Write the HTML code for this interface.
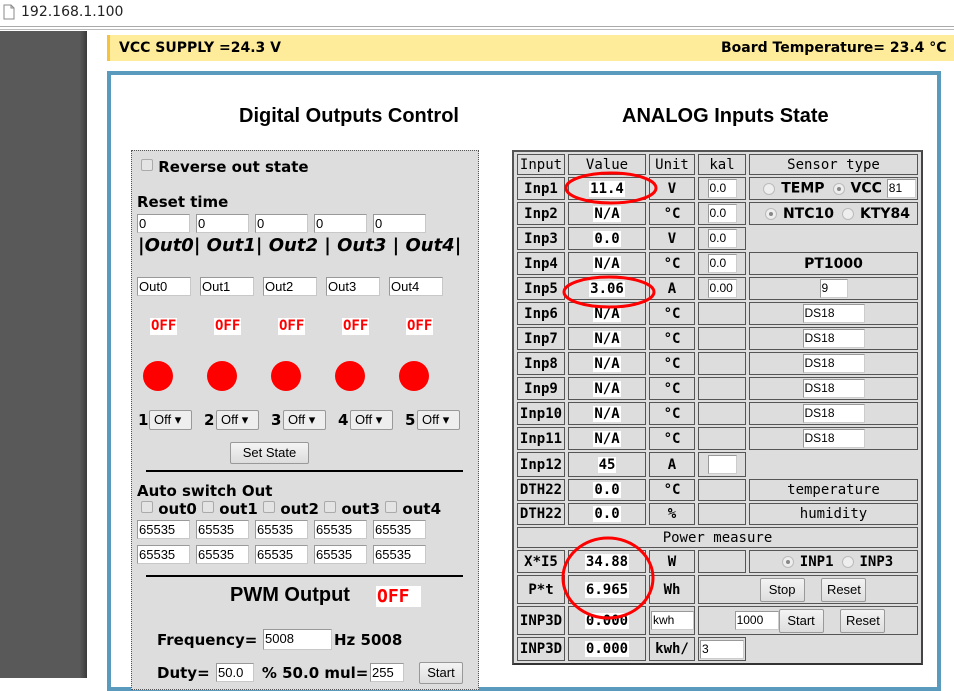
<!DOCTYPE html>
<html><head><meta charset="utf-8"><style>
*{box-sizing:border-box}
body{margin:0;width:954px;height:678px;overflow:hidden;background:#fff;font-family:"DejaVu Sans","Liberation Sans",sans-serif;position:relative}
.a{position:absolute}
.in{position:absolute;background:#fff;border:1px solid #c8c8c8;border-top-color:#999;border-left-color:#999;font:13px "Liberation Sans",sans-serif;padding:1px 1px;height:19px;line-height:15px;color:#000}
.b{font-weight:bold}
.off{position:absolute;background:#fff;color:#f00;font:bold 14px "DejaVu Sans Mono",monospace;padding:0 1px;line-height:17px}
.dot{position:absolute;width:30px;height:30px;border-radius:50%;background:#f00}
.sel{position:absolute;height:20px;border:1px solid #999;border-radius:2px;background:#eee;font:13px "Liberation Sans",sans-serif;padding:1px 4px;line-height:16px;width:43px}
.btn{position:absolute;border:1px solid #999;border-radius:2px;background:linear-gradient(#f4f4f4,#ddd);font:13px "Liberation Sans",sans-serif;text-align:center;line-height:20px}
table{position:absolute;left:512px;top:150px;width:411px;border:2px solid #555;border-right-color:#444;border-bottom-color:#333;border-spacing:3px 2px;background:#ddd;table-layout:fixed}
td{border:1px solid #555;padding:0;text-align:center;font:bold 14px "DejaVu Sans Mono",monospace;white-space:nowrap;overflow:hidden}
td.m{font-weight:normal}
td.s{font-family:"DejaVu Sans",sans-serif}
.v{background:#fff;font:bold 14px "DejaVu Sans Mono",monospace;padding:0 1px}
.ti{display:inline-block;background:#fff;border:1px solid #ccc;border-top-color:#999;border-left-color:#999;font:12px "Liberation Sans",sans-serif;font-weight:normal;text-align:left;height:19px;line-height:17px;padding-left:1px;vertical-align:middle}
.rd{display:inline-block;width:12px;height:12px;border-radius:50%;border:1px solid #bbb;background:#eee;vertical-align:middle;margin:0 6px 0 8px;position:relative}
.rd.on:after{content:"";position:absolute;left:3px;top:3px;width:4px;height:4px;border-radius:50%;background:#888}
.cb{display:inline-block;width:12px;height:12px;border:1px solid #aaa;border-radius:2px;background:#e4e4e4;vertical-align:top;margin-top:1px}
.ib{position:static;display:inline-block;width:45px;height:24px;line-height:22px;vertical-align:middle;font-weight:normal}
</style></head><body>
<div class="a" style="left:0;top:0;width:954px;height:27px;background:#fff;border-bottom:1px solid #aaa"></div>
<svg class="a" style="left:3px;top:4px" width="12" height="16"><path d="M1 1h7l3 3v11H1z" fill="#fff" stroke="#888"/><path d="M8 1v3h3" fill="none" stroke="#888"/></svg>
<div class="a" style="left:21px;top:4px;font:14px 'DejaVu Sans',sans-serif;color:#222">192.168.1.100</div>
<div class="a" style="left:0;top:29px;width:954px;height:1px;background:#bbb"></div>
<div class="a" style="left:0;top:31px;width:87px;height:647px;background:#595959"></div>
<div class="a" style="left:80px;top:31px;width:7px;height:647px;background:linear-gradient(90deg,#595959,#3a3a3a)"></div>
<div class="a" style="left:107px;top:35px;width:847px;height:26px;background:#feec9b;border-left:3px solid #f5c242"></div>
<div class="a b" style="left:119px;top:39px;font-size:14px;line-height:18px">VCC SUPPLY =24.3 V</div>
<div class="a b" style="left:721px;top:39px;font-size:14px;line-height:18px">Board Temperature= 23.4 °C</div>
<div class="a" style="left:107px;top:71px;width:834px;height:620px;border:4px solid #5a9bbd"></div>
<div class="a b" style="left:239px;top:105px;font:bold 20px 'Liberation Sans',sans-serif">Digital Outputs Control</div>
<div class="a b" style="left:622px;top:105px;font:bold 20px 'Liberation Sans',sans-serif">ANALOG Inputs State</div>

<div class="a" style="left:131px;top:150px;width:348px;height:540px;background:#ddd;border:1px dotted #555"></div>
<div class="a b" style="left:141px;top:158px;font-size:15px"><span class="cb"></span> Reverse out state</div>
<div class="a b" style="left:137px;top:193px;font-size:15px">Reset time</div>
<div class="in" style="left:137px;top:214px;width:53px">0</div><div class="in" style="left:196px;top:214px;width:53px">0</div><div class="in" style="left:255px;top:214px;width:53px">0</div><div class="in" style="left:314px;top:214px;width:53px">0</div><div class="in" style="left:373px;top:214px;width:53px">0</div>
<div class="a b" style="left:138px;top:235px;font-size:18px;font-style:italic;white-space:pre">|Out0| Out1| Out2 | Out3 | Out4|</div>
<div class="in" style="left:137px;top:277px;width:54px">Out0</div><div class="in" style="left:200px;top:277px;width:54px">Out1</div><div class="in" style="left:263px;top:277px;width:54px">Out2</div><div class="in" style="left:326px;top:277px;width:54px">Out3</div><div class="in" style="left:389px;top:277px;width:54px">Out4</div>
<div class="off" style="left:150px;top:318px">OFF</div><div class="off" style="left:214px;top:318px">OFF</div><div class="off" style="left:278px;top:318px">OFF</div><div class="off" style="left:342px;top:318px">OFF</div><div class="off" style="left:406px;top:318px">OFF</div>
<div class="dot" style="left:143px;top:361px"></div><div class="dot" style="left:207px;top:361px"></div><div class="dot" style="left:271px;top:361px"></div><div class="dot" style="left:335px;top:361px"></div><div class="dot" style="left:399px;top:361px"></div>
<div class="a b" style="left:138px;top:411px;font-size:15px">1</div><div class="sel" style="left:149px;top:410px">Off ▾</div>
<div class="a b" style="left:204px;top:411px;font-size:15px">2</div><div class="sel" style="left:216px;top:410px">Off ▾</div>
<div class="a b" style="left:271px;top:411px;font-size:15px">3</div><div class="sel" style="left:283px;top:410px">Off ▾</div>
<div class="a b" style="left:338px;top:411px;font-size:15px">4</div><div class="sel" style="left:350px;top:410px">Off ▾</div>
<div class="a b" style="left:405px;top:411px;font-size:15px">5</div><div class="sel" style="left:417px;top:410px">Off ▾</div>
<div class="btn" style="left:230px;top:442px;width:79px;height:22px">Set State</div>
<div class="a" style="left:146px;top:470px;width:317px;height:2px;background:#000"></div>
<div class="a b" style="left:137px;top:482px;font-size:15px">Auto switch Out</div>
<div class="a b" style="left:141px;top:500px;font-size:15px;white-space:pre"><span class="cb"></span> out0 <span class="cb"></span> out1 <span class="cb"></span> out2 <span class="cb"></span> out3 <span class="cb"></span> out4</div>
<div class="in" style="left:137px;top:520px;width:53px">65535</div><div class="in" style="left:196px;top:520px;width:53px">65535</div><div class="in" style="left:255px;top:520px;width:53px">65535</div><div class="in" style="left:314px;top:520px;width:53px">65535</div><div class="in" style="left:373px;top:520px;width:53px">65535</div>
<div class="in" style="left:137px;top:545px;width:53px">65535</div><div class="in" style="left:196px;top:545px;width:53px">65535</div><div class="in" style="left:255px;top:545px;width:53px">65535</div><div class="in" style="left:314px;top:545px;width:53px">65535</div><div class="in" style="left:373px;top:545px;width:53px">65535</div>
<div class="a" style="left:146px;top:575px;width:317px;height:2px;background:#000"></div>
<div class="a b" style="left:230px;top:584px;font:bold 20px 'Liberation Sans',sans-serif">PWM Output</div>
<div class="a" style="left:376px;top:586px;width:45px;height:21px;background:#fff;color:#f00;font:bold 18px 'DejaVu Sans Mono',monospace;line-height:21px;padding-left:1px">OFF</div>
<div class="a b" style="left:157px;top:631px;font-size:15px">Frequency=</div>
<div class="in" style="left:263px;top:629px;width:69px;height:21px">5008</div>
<div class="a b" style="left:334px;top:631px;font-size:15px">Hz 5008</div>
<div class="a b" style="left:157px;top:664px;font-size:15px;white-space:pre">Duty=          % 50.0 mul=</div>
<div class="in" style="left:216px;top:663px;width:38px">50.0</div>
<div class="in" style="left:370px;top:663px;width:34px">255</div>
<div class="btn" style="left:419px;top:662px;width:44px;height:22px">Start</div>

<table>
<colgroup><col style="width:48px"><col style="width:78px"><col style="width:46px"><col style="width:48px"><col></colgroup>
<tr style="height:21px"><td class="m">Input</td><td class="m">Value</td><td class="m">Unit</td><td class="m">kal</td><td class="m">Sensor type</td></tr>
<tr style="height:23px"><td>Inp1</td><td><span class="v">11.4</span></td><td>V</td><td><span class="ti" style="width:29px">0.0</span></td><td class="s"><span class="rd" style="margin-left:12px"></span>TEMP<span class="rd on"></span>VCC <span class="ti" style="width:29px">81</span></td></tr>
<tr style="height:23px"><td>Inp2</td><td><span class="v">N/A</span></td><td>°C</td><td><span class="ti" style="width:29px">0.0</span></td><td class="s"><span class="rd on"></span>NTC10<span class="rd"></span>KTY84</td></tr>
<tr style="height:23px"><td>Inp3</td><td><span class="v">0.0</span></td><td>V</td><td><span class="ti" style="width:29px">0.0</span></td><td style="border-color:#ddd"></td></tr>
<tr style="height:23px"><td>Inp4</td><td><span class="v">N/A</span></td><td>°C</td><td><span class="ti" style="width:29px">0.0</span></td><td class="s">PT1000</td></tr>
<tr style="height:23px"><td>Inp5</td><td><span class="v">3.06</span></td><td>A</td><td><span class="ti" style="width:29px">0.00</span></td><td><span class="ti" style="width:28px">9</span></td></tr>
<tr style="height:23px"><td>Inp6</td><td><span class="v">N/A</span></td><td>°C</td><td></td><td><span class="ti" style="width:62px">DS18</span></td></tr>
<tr style="height:23px"><td>Inp7</td><td><span class="v">N/A</span></td><td>°C</td><td></td><td><span class="ti" style="width:62px">DS18</span></td></tr>
<tr style="height:23px"><td>Inp8</td><td><span class="v">N/A</span></td><td>°C</td><td></td><td><span class="ti" style="width:62px">DS18</span></td></tr>
<tr style="height:23px"><td>Inp9</td><td><span class="v">N/A</span></td><td>°C</td><td></td><td><span class="ti" style="width:62px">DS18</span></td></tr>
<tr style="height:23px"><td>Inp10</td><td><span class="v">N/A</span></td><td>°C</td><td></td><td><span class="ti" style="width:62px">DS18</span></td></tr>
<tr style="height:23px"><td>Inp11</td><td><span class="v">N/A</span></td><td>°C</td><td></td><td><span class="ti" style="width:62px">DS18</span></td></tr>
<tr style="height:25px"><td>Inp12</td><td><span class="v">45</span></td><td>A</td><td><span class="ti" style="width:29px"></span></td><td style="border-color:#ddd"></td></tr>
<tr style="height:22px"><td>DTH22</td><td><span class="v">0.0</span></td><td>°C</td><td></td><td class="m">temperature</td></tr>
<tr style="height:22px"><td>DTH22</td><td><span class="v">0.0</span></td><td>%</td><td></td><td class="m">humidity</td></tr>
<tr style="height:21px"><td colspan="5" class="m">Power measure</td></tr>
<tr style="height:23px"><td>X*I5</td><td><span class="v">34.88</span></td><td>W</td><td></td><td><span class="rd on"></span>INP1<span class="rd"></span>INP3</td></tr>
<tr style="height:29px"><td>P*t</td><td><span class="v">6.965</span></td><td>Wh</td><td colspan="2" style="padding-left:10px"><span class="btn ib">Stop</span> &nbsp;<span class="btn ib">Reset</span></td></tr>
<tr style="height:29px"><td>INP3D</td><td><span class="v">0.000</span></td><td style="text-align:left;padding-left:1px"><span class="ti" style="width:43px">kwh</span></td><td colspan="2" style="padding-left:4px"><span class="ti" style="width:44px">1000</span><span class="btn ib">Start</span> &nbsp;<span class="btn ib">Reset</span></td></tr>
<tr style="height:24px"><td>INP3D</td><td><span class="v">0.000</span></td><td>kwh/</td><td style="text-align:left;padding-left:1px"><span class="ti" style="width:44px">3</span></td><td style="border-color:#ddd"></td></tr>
</table>
<svg class="a" style="left:0;top:0" width="954" height="678">
<g fill="none" stroke="#f00" stroke-width="3">
<ellipse cx="611" cy="188" rx="45" ry="15"/>
<ellipse cx="609" cy="292" rx="45" ry="15"/>
<ellipse cx="608" cy="578" rx="45" ry="40"/>
</g></svg>
</body></html>
